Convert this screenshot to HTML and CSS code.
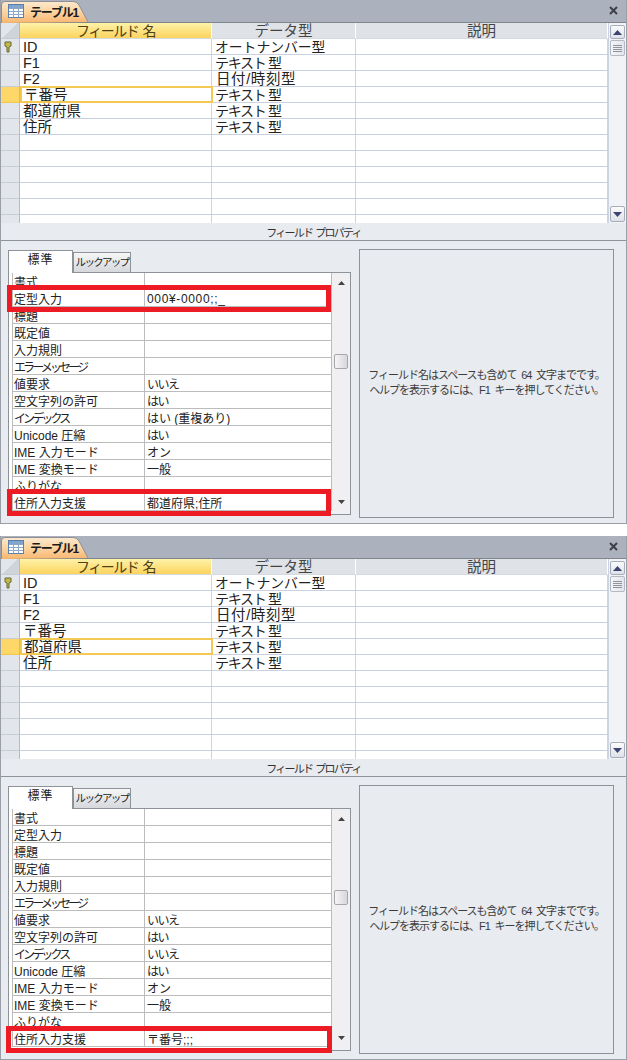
FILE: index.html
```html
<!DOCTYPE html>
<html lang="ja">
<head>
<meta charset="utf-8">
<title>テーブル1</title>
<link rel="stylesheet" href="styles.css">
</head>
<body>

<section class="window">
  <header class="tabstrip">
    <div class="doc-tab">
      <svg class="doc-tab-bg" width="92" height="23" viewBox="0 0 92 23">
        <defs><linearGradient id="tabA" x1="0" y1="0" x2="0" y2="1"><stop offset="0" stop-color="#fde9cf"/><stop offset=".5" stop-color="#fbd3a0"/><stop offset="1" stop-color="#f8b670"/></linearGradient></defs>
        <path d="M1.5 23V5Q1.5 1.5 5 1.5H73Q77 1.5 79 5L88 22" fill="url(#tabA)" stroke="#8c8f96"/>
      </svg>
      <svg class="doc-tab-icon" width="16" height="14" viewBox="0 0 16 14">
        <rect x=".5" y=".5" width="15" height="13" fill="#fff" stroke="#5b7fae"/>
        <rect x="1" y="1" width="14" height="3" fill="#7fa2cf"/>
        <path d="M5.5 1V13M10.5 1V13M1 4.5H15M1 7.5H15M1 10.5H15" stroke="#8fa9c9" fill="none"/>
      </svg>
      <span class="doc-tab-title">テーブル1</span>
    </div>
    <svg class="close" width="9" height="9" viewBox="0 0 9 9"><path d="M1 1L8 8M8 1L1 8" stroke="#3c3f45" stroke-width="2" fill="none"/></svg>
  </header>

  <div class="design">
    <div class="fields">
      <div class="row head">
        <div class="sel corner"></div>
        <div class="cell active-head">フィールド 名</div>
        <div class="cell">データ型</div>
        <div class="cell">説明</div>
      </div>
      <div class="row">
        <div class="sel"><svg class="key" width="8" height="12" viewBox="0 0 8 12"><path d="M1 1H7V5L5 6V11H3V6L1 5Z" fill="#c9b44a" stroke="#5d6b3a"/></svg></div>
        <div class="cell">ID</div><div class="cell t-auto">オートナンバー型</div><div class="cell"></div>
      </div>
      <div class="row"><div class="sel"></div><div class="cell">F1</div><div class="cell t-text">テキスト 型</div><div class="cell"></div></div>
      <div class="row"><div class="sel"></div><div class="cell">F2</div><div class="cell t-date">日付/時刻型</div><div class="cell"></div></div>
      <div class="row current"><div class="sel"></div><div class="cell">〒番号</div><div class="cell t-text">テキスト 型</div><div class="cell"></div></div>
      <div class="row"><div class="sel"></div><div class="cell">都道府県</div><div class="cell t-text">テキスト 型</div><div class="cell"></div></div>
      <div class="row"><div class="sel"></div><div class="cell">住所</div><div class="cell t-text">テキスト 型</div><div class="cell"></div></div>
      <div class="row"><div class="sel"></div><div class="cell"></div><div class="cell"></div><div class="cell"></div></div>
      <div class="row"><div class="sel"></div><div class="cell"></div><div class="cell"></div><div class="cell"></div></div>
      <div class="row"><div class="sel"></div><div class="cell"></div><div class="cell"></div><div class="cell"></div></div>
      <div class="row"><div class="sel"></div><div class="cell"></div><div class="cell"></div><div class="cell"></div></div>
      <div class="row"><div class="sel"></div><div class="cell"></div><div class="cell"></div><div class="cell"></div></div>
      <div class="row"><div class="sel"></div><div class="cell"></div><div class="cell"></div><div class="cell"></div></div>
    </div>
    <div class="vscroll">
      <div class="sbtn"><svg width="9" height="5" viewBox="0 0 9 5"><path d="M4.5 0L9 5H0Z" fill="#3c4472"/></svg></div>
      <div class="sthumb"><i></i><i></i><i></i><i></i></div>
      <div class="strack"></div>
      <div class="sbtn"><svg width="9" height="5" viewBox="0 0 9 5"><path d="M0 0H9L4.5 5Z" fill="#3c4472"/></svg></div>
    </div>
  </div>

  <div class="prop-title">フィールド プロパティ</div>

  <div class="props">
    <div class="prop-left">
      <div class="prop-tabs">
        <div class="ptab on">標準</div>
        <div class="ptab">ルックアップ</div>
      </div>
      <div class="prop-body">
        <div class="prop-list">
          <div class="prow"><div>書式</div><div></div></div>
          <div class="prow"><div>定型入力</div><div class="latin">000¥-0000;;_</div></div>
          <div class="prow"><div>標題</div><div></div></div>
          <div class="prow"><div>既定値</div><div></div></div>
          <div class="prow"><div>入力規則</div><div></div></div>
          <div class="prow"><div class="kana">エラーメッセージ</div><div></div></div>
          <div class="prow"><div>値要求</div><div class="soft">いいえ</div></div>
          <div class="prow"><div>空文字列の許可</div><div class="soft">はい</div></div>
          <div class="prow"><div class="kana">インデックス</div><div>はい (重複あり)</div></div>
          <div class="prow"><div>Unicode 圧縮</div><div class="soft">はい</div></div>
          <div class="prow"><div>IME 入力モード</div><div>オン</div></div>
          <div class="prow"><div>IME 変換モード</div><div>一般</div></div>
          <div class="prow"><div>ふりがな</div><div></div></div>
          <div class="prow"><div>住所入力支援</div><div>都道府県;住所</div></div>
        </div>
        <div class="pscroll">
          <svg class="parrow" width="7" height="4" viewBox="0 0 7 4"><path d="M3.5 0L7 4H0Z" fill="#444"/></svg>
          <div class="pthumb"></div>
          <svg class="parrow" width="7" height="4" viewBox="0 0 7 4"><path d="M0 0H7L3.5 4Z" fill="#444"/></svg>
        </div>
      </div>
    </div>
    <div class="help">フィールド名はスペースも含めて 64 文字までです。<br>ヘルプを表示するには、F1 キーを押してください。</div>
    <div class="mark mark-a"></div>
    <div class="mark mark-b"></div>
  </div>
</section>

<section class="window">
  <header class="tabstrip">
    <div class="doc-tab">
      <svg class="doc-tab-bg" width="92" height="23" viewBox="0 0 92 23">
        <defs><linearGradient id="tabB" x1="0" y1="0" x2="0" y2="1"><stop offset="0" stop-color="#fde9cf"/><stop offset=".5" stop-color="#fbd3a0"/><stop offset="1" stop-color="#f8b670"/></linearGradient></defs>
        <path d="M1.5 23V5Q1.5 1.5 5 1.5H73Q77 1.5 79 5L88 22" fill="url(#tabB)" stroke="#8c8f96"/>
      </svg>
      <svg class="doc-tab-icon" width="16" height="14" viewBox="0 0 16 14">
        <rect x=".5" y=".5" width="15" height="13" fill="#fff" stroke="#5b7fae"/>
        <rect x="1" y="1" width="14" height="3" fill="#7fa2cf"/>
        <path d="M5.5 1V13M10.5 1V13M1 4.5H15M1 7.5H15M1 10.5H15" stroke="#8fa9c9" fill="none"/>
      </svg>
      <span class="doc-tab-title">テーブル1</span>
    </div>
    <svg class="close" width="9" height="9" viewBox="0 0 9 9"><path d="M1 1L8 8M8 1L1 8" stroke="#3c3f45" stroke-width="2" fill="none"/></svg>
  </header>

  <div class="design">
    <div class="fields">
      <div class="row head">
        <div class="sel corner"></div>
        <div class="cell active-head">フィールド 名</div>
        <div class="cell">データ型</div>
        <div class="cell">説明</div>
      </div>
      <div class="row">
        <div class="sel"><svg class="key" width="8" height="12" viewBox="0 0 8 12"><path d="M1 1H7V5L5 6V11H3V6L1 5Z" fill="#c9b44a" stroke="#5d6b3a"/></svg></div>
        <div class="cell">ID</div><div class="cell t-auto">オートナンバー型</div><div class="cell"></div>
      </div>
      <div class="row"><div class="sel"></div><div class="cell">F1</div><div class="cell t-text">テキスト 型</div><div class="cell"></div></div>
      <div class="row"><div class="sel"></div><div class="cell">F2</div><div class="cell t-date">日付/時刻型</div><div class="cell"></div></div>
      <div class="row"><div class="sel"></div><div class="cell">〒番号</div><div class="cell t-text">テキスト 型</div><div class="cell"></div></div>
      <div class="row current"><div class="sel"></div><div class="cell">都道府県</div><div class="cell t-text">テキスト 型</div><div class="cell"></div></div>
      <div class="row"><div class="sel"></div><div class="cell">住所</div><div class="cell t-text">テキスト 型</div><div class="cell"></div></div>
      <div class="row"><div class="sel"></div><div class="cell"></div><div class="cell"></div><div class="cell"></div></div>
      <div class="row"><div class="sel"></div><div class="cell"></div><div class="cell"></div><div class="cell"></div></div>
      <div class="row"><div class="sel"></div><div class="cell"></div><div class="cell"></div><div class="cell"></div></div>
      <div class="row"><div class="sel"></div><div class="cell"></div><div class="cell"></div><div class="cell"></div></div>
      <div class="row"><div class="sel"></div><div class="cell"></div><div class="cell"></div><div class="cell"></div></div>
      <div class="row"><div class="sel"></div><div class="cell"></div><div class="cell"></div><div class="cell"></div></div>
    </div>
    <div class="vscroll">
      <div class="sbtn"><svg width="9" height="5" viewBox="0 0 9 5"><path d="M4.5 0L9 5H0Z" fill="#3c4472"/></svg></div>
      <div class="sthumb"><i></i><i></i><i></i><i></i></div>
      <div class="strack"></div>
      <div class="sbtn"><svg width="9" height="5" viewBox="0 0 9 5"><path d="M0 0H9L4.5 5Z" fill="#3c4472"/></svg></div>
    </div>
  </div>

  <div class="prop-title">フィールド プロパティ</div>

  <div class="props">
    <div class="prop-left">
      <div class="prop-tabs">
        <div class="ptab on">標準</div>
        <div class="ptab">ルックアップ</div>
      </div>
      <div class="prop-body">
        <div class="prop-list">
          <div class="prow"><div>書式</div><div></div></div>
          <div class="prow"><div>定型入力</div><div></div></div>
          <div class="prow"><div>標題</div><div></div></div>
          <div class="prow"><div>既定値</div><div></div></div>
          <div class="prow"><div>入力規則</div><div></div></div>
          <div class="prow"><div class="kana">エラーメッセージ</div><div></div></div>
          <div class="prow"><div>値要求</div><div class="soft">いいえ</div></div>
          <div class="prow"><div>空文字列の許可</div><div class="soft">はい</div></div>
          <div class="prow"><div class="kana">インデックス</div><div class="soft">いいえ</div></div>
          <div class="prow"><div>Unicode 圧縮</div><div class="soft">はい</div></div>
          <div class="prow"><div>IME 入力モード</div><div>オン</div></div>
          <div class="prow"><div>IME 変換モード</div><div>一般</div></div>
          <div class="prow"><div>ふりがな</div><div></div></div>
          <div class="prow"><div>住所入力支援</div><div>〒番号;;;</div></div>
        </div>
        <div class="pscroll">
          <svg class="parrow" width="7" height="4" viewBox="0 0 7 4"><path d="M3.5 0L7 4H0Z" fill="#444"/></svg>
          <div class="pthumb"></div>
          <svg class="parrow" width="7" height="4" viewBox="0 0 7 4"><path d="M0 0H7L3.5 4Z" fill="#444"/></svg>
        </div>
      </div>
    </div>
    <div class="help">フィールド名はスペースも含めて 64 文字までです。<br>ヘルプを表示するには、F1 キーを押してください。</div>
    <div class="mark mark-c"></div>
  </div>
</section>

</body>
</html>
```
FILE: styles.css
```css
* { box-sizing: border-box; }
html, body { margin: 0; padding: 0; background: #fff; }
body {
  font-family: "Liberation Sans", "Noto Sans CJK JP", sans-serif;
  color: #222;
  width: 627px;
  height: 1060px;
  overflow: hidden;
}
.window {
  width: 627px;
  height: 524px;
  margin-bottom: 12px;
  display: flex;
  flex-direction: column;
  background: #e8ebf0;
  border-left: 1px solid #9a9ea6;
  border-right: 1px solid #9a9ea6;
  border-bottom: 1px solid #9a9ea6;
}
.window:last-child { margin-bottom: 0; }

/* document tab strip */
.tabstrip {
  height: 23px;
  flex: none;
  display: flex;
  justify-content: space-between;
  align-items: center;
  background: #abb1bd;
  border-bottom: 1px solid #7f858d;
  padding-right: 8px;
  position: relative;
}
.doc-tab {
  width: 88px;
  height: 22px;
  display: flex;
  align-items: center;
  gap: 6px;
  padding-left: 7px;
  position: relative;
}
.doc-tab-bg { position: absolute; left: -1px; top: 0; }
.doc-tab-icon { position: relative; }
.doc-tab-title {
  position: relative;
  font-size: 12px;
  font-weight: 700;
  color: #1a1a1a;
  letter-spacing: -1.2px;
}
.close { margin-top: -1px; }

/* field grid */
.design { height: 200px; flex: none; display: flex; }
.fields { width: 608px; height: 200px; overflow: hidden; background: #fff; border-right: 1px solid #ccd3e2; }
.row {
  display: grid;
  grid-template-columns: 19px 192px 144px 252px;
  height: 16px;
  font-size: 14.5px;
  line-height: 17px;
}
.sel {
  background: #e2e5ea;
  border-right: 1px solid #b4bac6;
  border-bottom: 1px solid #c6cbd6;
  display: flex;
  align-items: center;
  justify-content: center;
  padding-right: 1px;
}
.cell {
  border-right: 1px solid #ccd3e2;
  border-bottom: 1px solid #c8d0e2;
  padding-left: 3px;
  white-space: nowrap;
  overflow: hidden;
  background: #fff;
}
.t-auto { font-size: 13.8px; }
.t-text { font-size: 14px; letter-spacing: -1.3px; }
.t-date { letter-spacing: .6px; padding-left: 4px; }
.key { margin-left: -3px; }
.head .cell {
  background: #dfe2e7;
  text-align: center;
  color: #444;
  padding-left: 0;
  border-right-color: #fff;
  border-bottom-color: #d4d9e2;
}
.head .active-head {
  background: linear-gradient(#fdf2a8, #fdd35f);
  color: #4b4016;
  font-size: 14px;
  letter-spacing: -1.5px;
  word-spacing: 2px;
}
.corner { background: linear-gradient(135deg, #e2e5ea 50%, #cfd3da 50%); }
.current .sel { background: #fdd868; border-bottom-color: #f3c64f; }
.current .cell:nth-child(2) { border: 2px solid #f3c953; padding-left: 2px; line-height: 14px; height: 17px; margin-top: -1px; position: relative; width: 193px; }

/* main scrollbar */
.vscroll {
  width: 17px;
  height: 200px;
  background: #f2f3f6;
  display: flex;
  flex-direction: column;
  padding: 1px 1px 0 1px;
}
.sbtn {
  height: 14px;
  flex: none;
  margin: 1px 0;
  border: 1px solid #a8aeb9;
  border-radius: 2px;
  background: linear-gradient(#fbfbfc, #dde1e8);
  display: flex;
  align-items: center;
  justify-content: center;
}
.vscroll .sbtn:last-child { height: 16px; margin: 0 0 1px; }
.sthumb {
  height: 16px;
  flex: none;
  border: 1px solid #b4b9c3;
  border-radius: 2px;
  background: linear-gradient(90deg, #f4f5f7, #e2e5ea);
  display: flex;
  flex-direction: column;
  justify-content: center;
  gap: 1px;
  padding: 0 2px;
}
.sthumb i { display: block; height: 1px; background: #8e939c; }
.strack { flex: 1; }

.prop-title {
  height: 18px;
  flex: none;
  text-align: center;
  font-size: 11px;
  letter-spacing: -1.8px;
  word-spacing: 2px;
  line-height: 18px;
  padding-top: 1px;
  color: #333;
  border-bottom: 1px solid #8e9299;
}

/* properties pane */
.props {
  flex: 1;
  position: relative;
  display: flex;
  gap: 8px;
  padding: 8px 0 0 7px;
  align-items: flex-start;
}
.prop-left { width: 343px; }
.prop-tabs { display: flex; height: 23px; align-items: flex-end; }
.ptab {
  width: 58px;
  height: 20px;
  border: 1px solid #8e9299;
  border-bottom: none;
  background: linear-gradient(#f6f6f6, #d6d8dc);
  font-size: 10.5px;
  letter-spacing: -1.7px;
  line-height: 19px;
  text-align: center;
  color: #222;
  white-space: nowrap;
}
.ptab.on {
  width: 65px;
  height: 23px;
  background: #fff;
  font-size: 12px;
  letter-spacing: 1px;
  line-height: 19px;
  position: relative;
  z-index: 1;
  margin-bottom: -1px;
}
.prop-body {
  height: 243px;
  background: #fff;
  border: 1px solid #8e9299;
  display: flex;
  padding-left: 3px;
}
.prop-list { width: 320px; }
.prow {
  display: grid;
  grid-template-columns: 132px 187px;
  height: 17px;
  font-size: 12px;
  line-height: 21px;
  border-bottom: 1px solid #bcbcbc;
  border-left: 1px solid #bcbcbc;
  border-right: 1px solid #bcbcbc;
  color: #222;
}
.prow > div { padding-left: 1px; white-space: nowrap; overflow: hidden; }
.prow > div:first-child { border-right: 1px solid #bcbcbc; }
.prow > div:last-child { padding-left: 2px; }
.prow .latin { letter-spacing: .65px; line-height: 19px; }
.prow .soft { letter-spacing: -1.5px; }
.prow .kana { letter-spacing: -2.9px; }
.pscroll {
  width: 18px;
  height: 241px;
  background: #f0f0f2;
  display: flex;
  flex-direction: column;
  align-items: center;
  padding-top: 8px;
}
.pthumb {
  width: 14px;
  height: 15px;
  margin-top: 69px;
  margin-bottom: 131px;
  border: 1px solid #a7a7ab;
  border-radius: 2px;
  background: linear-gradient(90deg, #f5f5f6, #d8d8dc);
  flex: none;
}
.parrow { flex: none; }
.help {
  width: 255px;
  height: 269px;
  border: 1px solid #8e9299;
  font-size: 11px;
  letter-spacing: -1px;
  word-spacing: 2.5px;
  line-height: 15px;
  text-align: center;
  white-space: nowrap;
  color: #3c3c3c;
  padding-top: 118px;
}
.mark { position: absolute; left: 6px; border: 5px solid #ed1c24; pointer-events: none; }
.mark-a { top: 44px; width: 324px; height: 27px; }
.mark-b { top: 248px; width: 324px; height: 27px; }
.mark-c { top: 249px; left: 5px; width: 326px; height: 27px; }
```
